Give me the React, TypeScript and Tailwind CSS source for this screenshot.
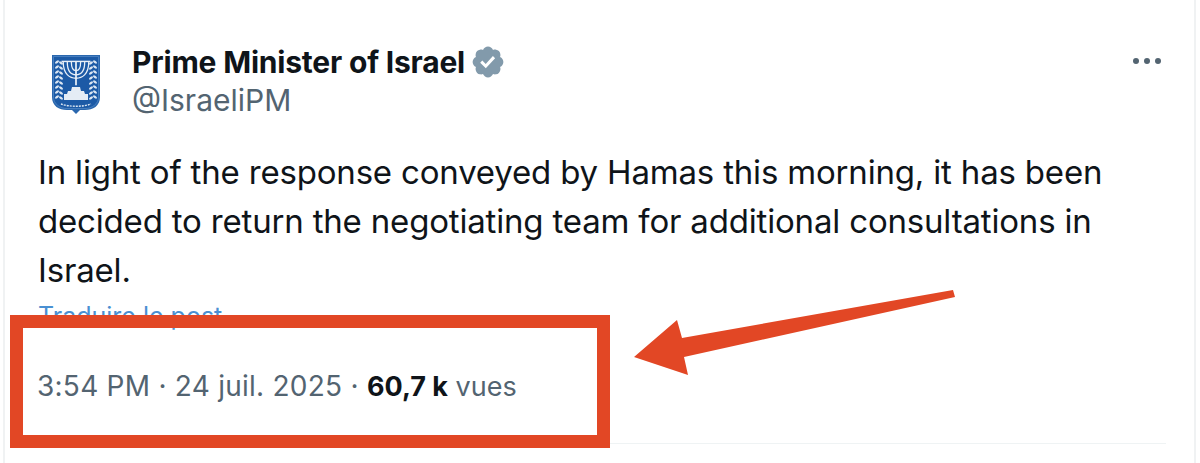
const stems = ['M-22 0C-22 22 -10 28 0 28', 'M-15 0C-15 17 -8 22 0 22', 'M-8 0C-8 11 -4 15 0 15', 'M8 0C8 11 4 15 0 15', 'M15 0C15 17 8 22 0 22', 'M22 0C22 22 10 28 0 28'];

function Emblem() {
  const leaves = [0, 1, 2, 3, 4, 5, 6, 7];
  return (
    <svg width="50" height="60" viewBox="0 0 50 60" className="shrink-0">
      <path d="M1 1H49V43C49 52 42 56 34 56H29L25 60L21 56H16C8 56 1 52 1 43Z" fill="#2a67ae" />
      <path d="M2.5 2.5H47.5V43C47.5 50 41 54.5 34 54.5H16C9 54.5 2.5 50 2.5 43Z" fill="#1c5aa6" stroke="#4f86c4" strokeWidth="0.8" />
      <g transform="translate(25 8) scale(0.58)" fill="none" stroke="#e8eff7" strokeWidth="2.2">
        {stems.map((d) => (
          <path key={d} d={d} />
        ))}
        <path d="M0 0V40" strokeWidth="3" />
        <path d="M-25 -1H25" strokeWidth="2.5" />
      </g>
      <path d="M21 33H29L30 37H33L34 40H37V46H13V40H16L17 37H20Z" fill="#e4ecf5" />
      {leaves.map((i) => (
        <g key={i} fill="#dbe6f2">
          <ellipse cx="6" cy={8 + i * 5} rx="2.3" ry="1.1" transform={`rotate(-35 6 ${8 + i * 5})`} />
          <ellipse cx="10" cy={9 + i * 5} rx="2.3" ry="1.1" transform={`rotate(35 10 ${9 + i * 5})`} />
          <ellipse cx="44" cy={8 + i * 5} rx="2.3" ry="1.1" transform={`rotate(35 44 ${8 + i * 5})`} />
          <ellipse cx="40" cy={9 + i * 5} rx="2.3" ry="1.1" transform={`rotate(-35 40 ${9 + i * 5})`} />
        </g>
      ))}
      <path d="M10 50C18 53 32 53 40 50" fill="none" stroke="#dbe6f2" strokeWidth="1.4" strokeDasharray="2 1" />
    </svg>
  );
}

function Badge() {
  return (
    <svg width="36" height="36" viewBox="0 0 22 22" className="shrink-0">
      <path
        d="M20.396 11c-.018-.646-.215-1.275-.57-1.816-.354-.54-.852-.972-1.438-1.246.223-.607.27-1.264.14-1.897-.131-.634-.437-1.218-.882-1.687-.47-.445-1.053-.75-1.687-.882-.633-.13-1.29-.083-1.897.14-.273-.587-.704-1.086-1.245-1.44S11.647 1.62 11 1.604c-.646.017-1.273.213-1.813.568s-.969.854-1.24 1.44c-.608-.223-1.267-.272-1.902-.14-.635.13-1.22.436-1.69.882-.445.47-.749 1.055-.878 1.688-.13.633-.08 1.29.144 1.896-.587.274-1.087.705-1.443 1.245-.356.54-.555 1.17-.574 1.817.02.647.218 1.276.574 1.817.356.54.856.972 1.443 1.245-.224.606-.274 1.263-.144 1.896.13.634.433 1.218.877 1.688.47.443 1.054.747 1.687.878.633.132 1.29.084 1.897-.136.274.586.705 1.084 1.246 1.439.54.354 1.17.551 1.816.569.647-.016 1.276-.213 1.817-.567s.972-.854 1.245-1.44c.604.239 1.266.296 1.903.164.636-.132 1.22-.447 1.68-.907.46-.46.776-1.044.908-1.681s.075-1.299-.165-1.903c.586-.274 1.084-.705 1.439-1.246.354-.54.551-1.17.569-1.816z"
        fill="#829aab"
      />
      <path d="M9.662 14.85l-3.429-3.428 1.293-1.302 2.072 2.072 4.4-4.794 1.347 1.246z" fill="#ffffff" />
    </svg>
  );
}

export default function App() {
  return (
    <div className="relative h-[463px] w-[1200px] overflow-hidden bg-white font-['Inter','Liberation_Sans',sans-serif]">
      <div className="mx-[3px] h-full w-[1193px] border-x-2 border-[#f0f2f3] pl-[33px] pr-[28px] pt-[46px]">
        <div className="flex items-start">
          <div className="ml-[13px] mt-[8px] mr-[31px]">
            <Emblem />
          </div>
          <div className="flex-1">
            <div className="flex h-[32px] items-center">
              <span className="text-[30px] font-bold tracking-[-0.2px] text-[#0f1419]">Prime Minister of Israel</span>
              <span className="ml-[5px]">
                <Badge />
              </span>
            </div>
            <div className="mt-[5px] text-[30px] leading-[34px] text-[#536471]">@IsraeliPM</div>
          </div>
          <div className="mr-[5px] mt-[12px] flex gap-[5px]">
            <span className="h-[6px] w-[6px] rounded-full bg-[#536471]" />
            <span className="h-[6px] w-[6px] rounded-full bg-[#536471]" />
            <span className="h-[6px] w-[6px] rounded-full bg-[#536471]" />
          </div>
        </div>
        <p className="mt-[31px] w-[1090px] text-[33px] leading-[49px] tracking-[-0.18px] text-[#0f1419]">
          In light of the response conveyed by Hamas this morning, it has been decided to return the negotiating team for additional consultations in Israel.
        </p>
        <div className="mt-[6px] text-[25px] leading-[30px] text-[#4a90d2]">Traduire le post</div>
        <div className="-ml-px mt-[37px] text-[28px] leading-[36px] text-[#536471]">
          <span className="tracking-[0.25px]">3:54 PM · 24 juil. 2025 · </span>
          <span className="text-[27px] font-bold text-[#0f1419]">60,7 k</span>
          <span className="text-[27px]"> vues</span>
        </div>
        <div className="mt-[38px] h-px w-full bg-[#eff3f4]" />
      </div>
      <div className="absolute left-[10px] top-[315px] h-[133px] w-[600px] border-[13px] border-[#e24725]" />
      <svg className="absolute left-[630px] top-[285px]" width="330" height="95" viewBox="630 285 330 95">
        <polygon points="634,357 677,320 682,338 953,290 955,297 684,357 688,375" fill="#e24725" />
      </svg>
    </div>
  );
}
